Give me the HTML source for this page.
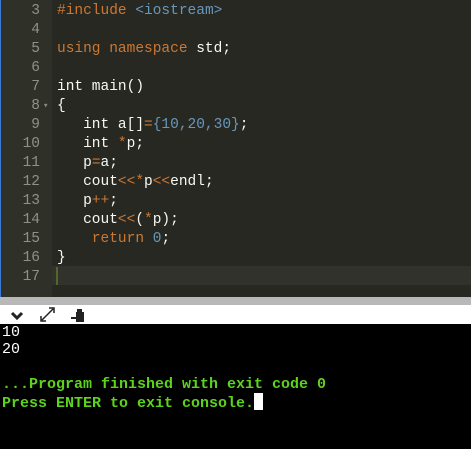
<!DOCTYPE html>
<html><head><style>
body{margin:0;width:471px;height:449px;overflow:hidden;background:#000;position:relative;font-family:"Liberation Mono",monospace}
#ed{position:absolute;left:0;top:0;width:471px;height:297px;background:#272822}
#gut{position:absolute;left:0;top:0;width:52px;height:297px;background:#2f3129;border-left:1px solid #3b7ad6;box-sizing:border-box}
.ln{position:absolute;left:0;width:40px;text-align:right;color:#8f908a;font-size:14.5px;line-height:19px}
.cd{position:absolute;left:57px;color:#f8f8f2;font-size:14.5px;line-height:19px;white-space:pre}
.o{color:#cc7833}.b{color:#6897bb}
#cur{position:absolute;left:52px;top:266px;width:419px;height:19px;background:#31322c}
#bar{position:absolute;left:0;top:297px;width:471px;height:8px;background:#b8b8b8}
#tb{position:absolute;left:0;top:305px;width:471px;height:19px;background:#fff}
#con{position:absolute;left:2px;top:324px;font-size:15px;line-height:17.3px;white-space:pre;color:#fff}
.g{color:#5cd31d;font-weight:bold}
</style></head><body>
<div id="ed"></div><div id="gut"></div><div id="cur"></div>
<div style="position:absolute;left:56px;top:267px;width:2px;height:18px;background:#4d6a2a"></div>
<div class="ln" style="top:2px">3</div><div class="cd" style="top:2px"><span class="o">#include</span> <span class="b">&lt;iostream&gt;</span></div>
<div class="ln" style="top:21px">4</div>
<div class="ln" style="top:40px">5</div><div class="cd" style="top:40px"><span class="o">using namespace</span> std;</div>
<div class="ln" style="top:59px">6</div>
<div class="ln" style="top:78px">7</div><div class="cd" style="top:78px">int main()</div>
<div class="ln" style="top:97px">8</div><div style="position:absolute;left:43px;top:97px;color:#8f908a;font-size:9px;line-height:19px">▾</div><div class="cd" style="top:97px">{</div>
<div class="ln" style="top:116px">9</div><div class="cd" style="top:116px">   int a[]<span class="o">=</span><span class="b">{10,20,30}</span>;</div>
<div class="ln" style="top:135px">10</div><div class="cd" style="top:135px">   int <span class="o">*</span>p;</div>
<div class="ln" style="top:154px">11</div><div class="cd" style="top:154px">   p<span class="o">=</span>a;</div>
<div class="ln" style="top:173px">12</div><div class="cd" style="top:173px">   cout<span class="o">&lt;&lt;*</span>p<span class="o">&lt;&lt;</span>endl;</div>
<div class="ln" style="top:192px">13</div><div class="cd" style="top:192px">   p<span class="o">++</span>;</div>
<div class="ln" style="top:211px">14</div><div class="cd" style="top:211px">   cout<span class="o">&lt;&lt;</span>(<span class="o">*</span>p);</div>
<div class="ln" style="top:230px">15</div><div class="cd" style="top:230px">    <span class="o">return</span> <span class="b">0</span>;</div>
<div class="ln" style="top:249px">16</div><div class="cd" style="top:249px">}</div>
<div class="ln" style="top:268px">17</div>
<div id="bar"></div>
<div id="tb">
<svg width="471" height="19" style="position:absolute;left:0;top:0">
<path d="M12 8 L17 13 L22 8" stroke="#222" stroke-width="3" fill="none"/>
<path d="M42 15 L53 4 M49 3 L54 3 L54 8 M41 11 L41 16 L46 16" stroke="#222" stroke-width="1.5" fill="none"/>
<rect x="76" y="7" width="8" height="10" fill="#222"/><rect x="77" y="4" width="5" height="4" fill="#222"/><path d="M71 13 L76 13" stroke="#222" stroke-width="2"/>
</svg></div>
<div id="con">10
20

<span class="g">...Program finished with exit code 0
Press ENTER to exit console.</span><span style="display:inline-block;width:9px;height:17px;background:#fff;vertical-align:-3px"></span></div>
</body></html>
